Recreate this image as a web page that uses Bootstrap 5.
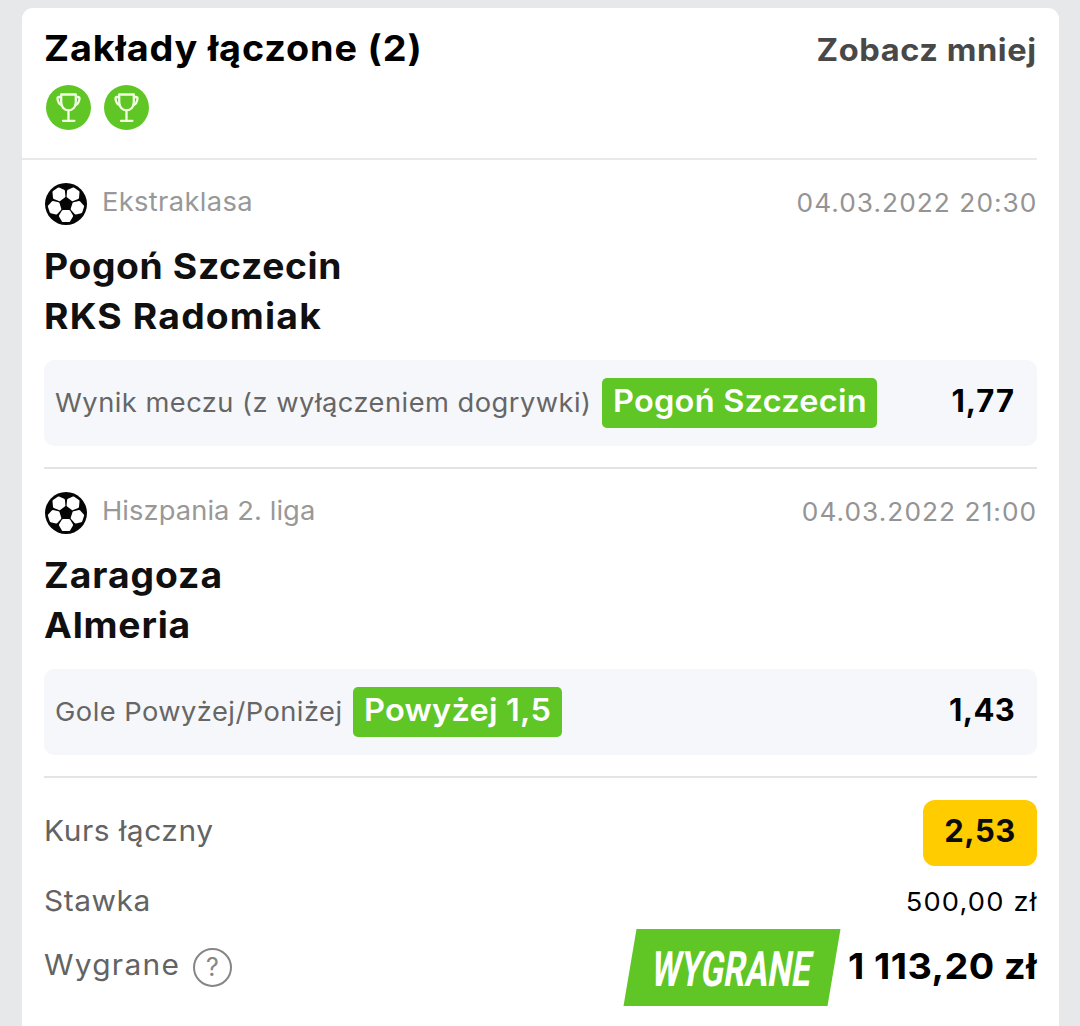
<!DOCTYPE html>
<html lang="pl">
<head>
<meta charset="utf-8">
<meta name="viewport" content="width=device-width, initial-scale=1">
<title>Zakłady łączone</title>
<link href="https://cdn.jsdelivr.net/npm/bootstrap@5.3.0/dist/css/bootstrap.min.css" rel="stylesheet">
<style>
  body { background: #e7e8ea; font-family: Inter, "Noto Sans", sans-serif; color: #0c0c0c; }
  .page { height: 100vh; padding: 8px 21px 0 22px; }
  .coupon { background: #fff; border-radius: 11px 11px 0 0; min-height: 100%; white-space: nowrap; }
  /* Slightly extended letterforms */
  .wide { display: inline-block; transform: scaleX(1.05); transform-origin: left; }
  .wide-end { display: inline-block; transform: scaleX(1.05); transform-origin: right; }
  .coupon-head { height: 152px; padding-top: 15px; margin-right: 22px; padding-left: 22px; border-bottom: 2px solid #e8e9ea; }
  .coupon-title { font-size: 36px; line-height: 50px; letter-spacing: .82px; color: #000; }
  .less { font-size: 31px; line-height: 53px; letter-spacing: .55px; color: #484848; }
  .cups { gap: 13px; margin: 9px 0 0 2px; }
  .match { height: 309px; margin: 0 22px; padding-top: 23px; border-bottom: 2px solid #e3e4e6; }
  .ball { margin-left: 1px; }
  .league { font-size: 26px; line-height: 37px; color: #989898; margin-left: 14.5px; letter-spacing: .33px; }
  .league-long { letter-spacing: .08px; }
  .when { font-size: 25px; line-height: 40px; color: #949494; letter-spacing: 1px; }
  .teams { font-size: 35.5px; line-height: 50px; padding-top: 1px; margin: 16px 0 18px 0; color: #101010; }
  .teams > div { width: max-content; }
  .t1 { letter-spacing: .59px; } .t2 { letter-spacing: 1.12px; } .t3 { letter-spacing: .91px; } .t4 { letter-spacing: .77px; }
  .pick { height: 86px; padding: 0 23px 0 11px; background: #f6f7fa; border-radius: 10px; }
  .market { font-size: 26px; line-height: 36px; color: #666; letter-spacing: .44px; padding-bottom: 1px; width: 510px; margin-right: 37px; }
  .market-short { width: 274px; margin-right: 24px; letter-spacing: .43px; }
  .choice { height: 50px; width: 275px; background: #5fc626; color: #fff; border-radius: 5px; font-size: 31px; line-height: 45px; letter-spacing: .21px; padding-left: 10.5px; }
  .choice-short { width: 209px; }
  .odds { font-size: 31px; line-height: 40px; padding-bottom: 5px; color: #000; letter-spacing: .3px; margin-right: -1px; }
  .odds-a { letter-spacing: 1px; }
  .sums { margin: 0 22px; padding-top: 22px; }
  .lbl { font-size: 28.5px; color: #636363; letter-spacing: .52px; }
  .total { width: 114px; height: 66px; border-radius: 12px; background: #fc0; font-size: 31px; line-height: 61px; letter-spacing: .5px; }
  .r1 { height: 66px; } .r1 .lbl { line-height: 61px; }
  .r2 { height: 63px; padding-top: 8px; }
  .stake { font-size: 26px; letter-spacing: 1.1px; color: #000; }
  .r3 { height: 77px; }
  .r3 .lbl { letter-spacing: 1.2px; padding-bottom: 5px; width: 130px; }
  .help { width: 39px; height: 39px; border: 2px solid #868686; border-radius: 50%; color: #868686; font-size: 25px; line-height: 35px; margin-left: 19px; }
  .tag { overflow: visible; }
  .won { font-size: 36px; letter-spacing: .4px; padding-bottom: 3px; margin-left: 16px; color: #000; }
</style>
</head>
<body>
<svg width="0" height="0" class="position-absolute" aria-hidden="true">
  <defs>
    <symbol id="cup" viewBox="0 0 45 45">
      <circle cx="22.5" cy="22.5" r="22.5" fill="#5fc626"/>
      <g fill="none" stroke="#f0ffe2" stroke-width="2.3" stroke-linecap="round" stroke-linejoin="round">
        <path d="M15.200 9.500h14.600v7.500c0 5-3 8.300-7.300 8.300s-7.300-3.300-7.300-8.300zM22.500 25.200v10.600M17 35.800h11.400"/>
        <path d="M15 12h-2.200q-1.500 0-1.300 1.600c.3 3 1.400 5.600 4.300 6.600M30 12h2.200q1.500 0 1.300 1.600c-.3 3-1.400 5.600-4.300 6.600"/>
      </g>
    </symbol>
    <symbol id="ball" viewBox="-21 -21 42 42">
      <circle r="21" fill="#050505"/>
      <g fill="#fff" stroke="#fff" stroke-width="2.700" stroke-linejoin="round">
        <path id="hex" transform="rotate(36)" d="M-5.700 -12L-2.900 -16.700H2.900L5.700 -12L2.900 -7.300H-2.900Z"/>
        <use href="#hex" transform="rotate(72)"/>
        <use href="#hex" transform="rotate(144)"/>
        <use href="#hex" transform="rotate(216)"/>
        <use href="#hex" transform="rotate(288)"/>
      </g>
    </symbol>
  </defs>
</svg>
<div class="page overflow-hidden">
  <main class="coupon">
    <header class="coupon-head">
      <div class="d-flex justify-content-between">
        <h1 class="coupon-title wide fw-bold mb-0">Zakłady łączone (2)</h1>
        <a class="less wide-end fw-bold text-decoration-none" href="#">Zobacz mniej</a>
      </div>
      <div class="cups d-flex">
        <svg width="45" height="45"><use href="#cup"/></svg>
        <svg width="45" height="45"><use href="#cup"/></svg>
      </div>
    </header>

    <section class="match">
      <div class="d-flex align-items-start">
        <svg class="ball" width="42" height="42"><use href="#ball"/></svg>
        <span class="league wide">Ekstraklasa</span>
        <span class="when wide-end ms-auto">04.03.2022 20:30</span>
      </div>
      <div class="teams fw-bold">
        <div class="t1 wide d-block">Pogoń Szczecin</div>
        <div class="t2 wide d-block">RKS Radomiak</div>
      </div>
      <div class="pick d-flex align-items-center">
        <span class="market wide">Wynik meczu (z wyłączeniem dogrywki)</span>
        <span class="choice fw-semibold"><span class="wide">Pogoń Szczecin</span></span>
        <span class="odds odds-a fw-bold ms-auto">1,77</span>
      </div>
    </section>

    <section class="match">
      <div class="d-flex align-items-start">
        <svg class="ball" width="42" height="42"><use href="#ball"/></svg>
        <span class="league league-long wide">Hiszpania 2. liga</span>
        <span class="when wide-end ms-auto">04.03.2022 21:00</span>
      </div>
      <div class="teams fw-bold">
        <div class="t3 wide d-block">Zaragoza</div>
        <div class="t4 wide d-block">Almeria</div>
      </div>
      <div class="pick d-flex align-items-center">
        <span class="market market-short wide">Gole Powyżej/Poniżej</span>
        <span class="choice choice-short fw-semibold"><span class="wide">Powyżej 1,5</span></span>
        <span class="odds fw-bold ms-auto">1,43</span>
      </div>
    </section>

    <section class="sums">
      <div class="r1 d-flex justify-content-between">
        <span class="lbl wide">Kurs łączny</span>
        <span class="total fw-bold text-center">2,53</span>
      </div>
      <div class="r2 d-flex justify-content-between align-items-center">
        <span class="lbl wide">Stawka</span>
        <span class="stake wide-end">500,00 zł</span>
      </div>
      <div class="r3 d-flex align-items-center">
        <span class="lbl wide">Wygrane</span>
        <span class="help text-center">?</span>
        <svg class="tag ms-auto" width="218" height="77" viewBox="0 0 218 77">
          <path d="M13.500 0H217.500L204.500 77H.5Z" fill="#5fc626"/>
          <text transform="translate(27 57) skewX(-9)" font-family="Roboto, sans-serif" font-weight="700" font-size="49" textLength="159" lengthAdjust="spacingAndGlyphs" fill="#fff">WYGRANE</text>
        </svg>
        <span class="won wide-end fw-bold">1 113,20 zł</span>
      </div>
    </section>
  </main>
</div>
<script src="https://cdn.jsdelivr.net/npm/bootstrap@5.3.0/dist/js/bootstrap.bundle.min.js"></script>
</body>
</html>
